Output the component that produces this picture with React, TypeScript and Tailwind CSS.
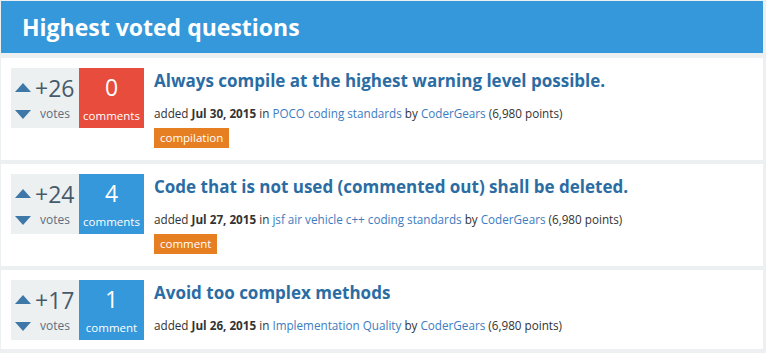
import React from "react";

type Q = {
  votes: string;
  count: string;
  label: string;
  countBg: string;
  title: string;
  date: string;
  category: string;
  tag?: string;
};

const questions: Q[] = [
  {
    votes: "+26",
    count: "0",
    label: "comments",
    countBg: "bg-[#e74c3c]",
    title: "Always compile at the highest warning level possible.",
    date: "Jul 30, 2015",
    category: "POCO coding standards",
    tag: "compilation",
  },
  {
    votes: "+24",
    count: "4",
    label: "comments",
    countBg: "bg-[#3498db]",
    title: "Code that is not used (commented out) shall be deleted.",
    date: "Jul 27, 2015",
    category: "jsf air vehicle c++ coding standards",
    tag: "comment",
  },
  {
    votes: "+17",
    count: "1",
    label: "comment",
    countBg: "bg-[#3498db]",
    title: "Avoid too complex methods",
    date: "Jul 26, 2015",
    category: "Implementation Quality",
  },
];

function Up() {
  return (
    <svg width="16" height="9" viewBox="0 0 16 9">
      <polygon points="8,0 16,9 0,9" fill="#3d78a8" />
    </svg>
  );
}
function Down() {
  return (
    <svg width="16" height="9" viewBox="0 0 16 9">
      <polygon points="0,0 16,0 8,9" fill="#3d78a8" />
    </svg>
  );
}

function Card({ q }: { q: Q }) {
  return (
    <div className="bg-white mr-[3px] ml-[1px] flex items-start px-[10px] pt-[10px] pb-[9px]">
      <div className="flex shrink-0 h-[60px]">
        <div className="w-[68px] bg-[#ecf0f1] flex flex-col pl-[4px]">
          <div className="flex items-center h-[36px] pt-[2px]">
            <Up />
            <span className="text-[23px] text-[#475a6b] leading-none ml-[4px] mt-[2px]">{q.votes}</span>
          </div>
          <div className="flex items-center h-[20px]">
            <Down />
            <span className="text-[12px] text-[#5d6d7e] ml-[9px] leading-none">votes</span>
          </div>
        </div>
        <div className={`w-[65px] ${q.countBg} flex flex-col items-center text-white`}>
          <span className="text-[23px] leading-none mt-[8px] h-[30px]">{q.count}</span>
          <span className="text-[11.5px] leading-none mt-[4px]">{q.label}</span>
        </div>
      </div>
      <div className="ml-[10px] flex flex-col">
        <div className="text-[17px] font-bold text-[#2b6ca3] leading-[24px] mt-[1px]">{q.title}</div>
        <div className="text-[11.7px] text-[#333] mt-[12px] leading-[16px]">
          added <span className="font-bold">{q.date}</span> in{" "}
          <span className="text-[#3d7cc0]">{q.category}</span> by{" "}
          <span className="text-[#3d7cc0]">CoderGears</span> (6,980 points)
        </div>
        {q.tag && (
          <div className="mt-[7px] mb-[3px] flex">
            <span className="bg-[#e67e22] text-white text-[11.5px] leading-[20px] h-[20px] px-[6px]">{q.tag}</span>
          </div>
        )}
      </div>
    </div>
  );
}

export default function App() {
  return (
    <div
      className="w-[766px] h-[353px] bg-[#ecf0f1] pt-[1px] overflow-hidden"
      style={{ fontFamily: "'Open Sans', 'Noto Sans', sans-serif" }}
    >
      <div className="ml-[1px] mr-[3px] h-[52px] bg-[#3498db] flex items-center pl-[21px]">
        <h1 className="text-white text-[23px] font-bold leading-none">Highest voted questions</h1>
      </div>
      <div className="flex flex-col gap-[4px] mt-[5px]">
        {questions.map((q, i) => (
          <Card key={i} q={q} />
        ))}
      </div>
    </div>
  );
}
